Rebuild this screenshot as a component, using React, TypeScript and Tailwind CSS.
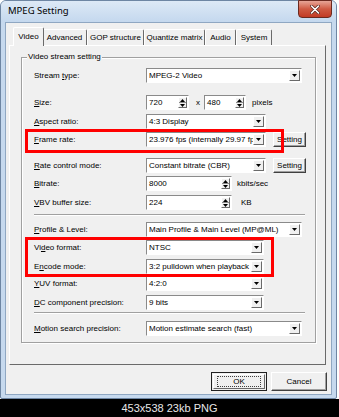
import React from "react";

const F = { fontFamily: '"Liberation Sans", Arial, sans-serif' };

function Arrow() {
  return (
    <svg width="5" height="3" viewBox="0 0 5 3" className="block">
      <path d="M0 0H5L2.5 3Z" fill="#000" />
    </svg>
  );
}

function DropBtn() {
  return (
    <div className="flex h-full w-[11px] shrink-0 items-center justify-center border-t border-l border-b border-r border-t-white border-l-white border-b-[#6a6a6a] border-r-[#6a6a6a] bg-[#f0f0f0]">
      <Arrow />
    </div>
  );
}

function Combo({ w, text }: { w: number; text: string }) {
  return (
    <div
      className="flex h-[15px] shrink-0 items-stretch border border-t-[#8a8a8a] border-l-[#8a8a8a] border-b-white border-r-white bg-white p-[1px]"
      style={{ width: w }}
    >
      <div className="flex-1 overflow-hidden whitespace-nowrap pl-[1px] text-[8px] leading-[11px] text-black">{text}</div>
      <DropBtn />
    </div>
  );
}

function Spin() {
  return (
    <div className="flex h-full w-[9px] shrink-0 flex-col border border-t-white border-l-white border-b-[#6a6a6a] border-r-[#6a6a6a] bg-[#f0f0f0]">
      <div className="flex flex-1 items-center justify-center">
        <svg width="5" height="3" viewBox="0 0 5 3"><path d="M0 3H5L2.5 0Z" fill="#000" /></svg>
      </div>
      <div className="h-px bg-[#8a8a8a]" />
      <div className="flex flex-1 items-center justify-center">
        <svg width="5" height="3" viewBox="0 0 5 3"><path d="M0 0H5L2.5 3Z" fill="#000" /></svg>
      </div>
    </div>
  );
}

function SpinEdit({ w, text }: { w: number; text: string }) {
  return (
    <div
      className="flex h-[15px] shrink-0 items-stretch border border-t-[#8a8a8a] border-l-[#8a8a8a] border-b-white border-r-white bg-white p-[1px]"
      style={{ width: w }}
    >
      <div className="flex-1 whitespace-nowrap pl-[1px] text-[8px] leading-[11px] text-black">{text}</div>
      <Spin />
    </div>
  );
}

function SmallBtn({ children }: { children: React.ReactNode }) {
  return (
    <div className="flex h-[15px] w-[33px] items-center justify-center border border-t-white border-l-white border-b-[#404040] border-r-[#404040] bg-[#f0f0f0] text-[8px] text-black shadow-[inset_-1px_-1px_0_#a0a0a0]">
      {children}
    </div>
  );
}

function Label({ children }: { children: React.ReactNode }) {
  return <div className="w-[112px] shrink-0 whitespace-nowrap text-[8px] leading-[15px] text-black">{children}</div>;
}

function U({ children }: { children: React.ReactNode }) {
  return <span className="underline decoration-[0.5px] underline-offset-[1px]">{children}</span>;
}

function Row({ mt, children }: { mt: string; children: React.ReactNode }) {
  return <div className={`flex h-[15px] items-center ${mt}`}>{children}</div>;
}

function Sep({ mt }: { mt: string }) {
  return (
    <div className={`${mt} mr-[10px] flex flex-col`}>
      <div className="h-px bg-[#a0a0a0]" />
      <div className="h-px bg-white" />
    </div>
  );
}

function Tab({ label, w, sel }: { label: string; w: number; sel?: boolean }) {
  return (
    <div
      className={`flex items-center justify-center border-l border-t border-r border-l-white border-t-white border-r-[#6a6a6a] bg-[#f0f0f0] text-[8px] text-black rounded-t-[2px] ${
        sel ? "relative z-10 -mb-px h-[19px] -mx-[2px]" : "h-[16px]"
      }`}
      style={{ width: w }}
    >
      {label}
    </div>
  );
}

export default function App() {
  return (
    <div className="flex h-[417px] w-[339px] flex-col overflow-hidden bg-black" style={F}>
      <div className="h-[399px] bg-white">
        <div className="flex h-[399px] w-[337px] flex-col rounded-t-[6px] rounded-b-[2px] border border-[#6e86a3] bg-[#c6d9ee]">
          {/* title bar */}
          <div className="relative flex h-[21px] shrink-0 items-center rounded-t-[5px] bg-gradient-to-b from-[#dde9f6] to-[#c4d8ee] pl-[7px]">
            <span className="text-[9.5px] text-black" style={{ fontFamily: '"Noto Sans", "Open Sans", sans-serif' }}>MPEG Setting</span>
            <div className="absolute right-[4px] top-[-1px] flex h-[18px] w-[34px] items-center justify-center rounded-b-[4px] border border-[#6b2a20] bg-gradient-to-b from-[#e6a597] via-[#cf5a43] to-[#c23a24]">
              <svg width="10" height="9" viewBox="0 0 10 9">
                <path d="M1.5 1L8.5 8M8.5 1L1.5 8" stroke="#5a2a22" strokeWidth="3" strokeLinecap="round" />
                <path d="M1.5 1L8.5 8M8.5 1L1.5 8" stroke="#fff" strokeWidth="1.6" strokeLinecap="round" />
              </svg>
            </div>
          </div>
          {/* client */}
          <div className="mx-[4px] flex h-[373px] flex-col border border-[#8fa7c2] bg-[#f0f0f0] px-[3px]">
            {/* tabs */}
            <div className="mt-[5px] flex h-[17px] items-end pl-[6px]">
              <Tab label="Video" w={31} sel />
              <Tab label="Advanced" w={45} />
              <Tab label="GOP structure" w={57} />
              <Tab label="Quantize matrix" w={61} />
              <Tab label="Audio" w={31} />
              <Tab label="System" w={36} />
            </div>
            {/* panel */}
            <div className="relative h-[320px] w-[317px] border border-t-white border-l-white border-b-[#6a6a6a] border-r-[#6a6a6a] pt-[11px] pl-[11px]">
              <div className="relative h-[286px] w-[295px] border border-[#a0a0a0] shadow-[1px_1px_0_#fff,inset_1px_1px_0_#fff]">
                <div className="absolute left-[5px] top-[-7px] bg-[#f0f0f0] px-[1px] text-[8px] leading-[12px] text-black">Video stream setting</div>
                <div className="flex flex-col pl-[12px] pt-[10px]">
                  <Row mt="mt-0">
                    <Label>Stream <U>t</U>ype:</Label>
                    <Combo w={156} text="MPEG-2 Video" />
                  </Row>
                  <Row mt="mt-[12px]">
                    <Label><U>S</U>ize:</Label>
                    <SpinEdit w={43} text="720" />
                    <span className="ml-[7px] w-[8px] text-[8px]">x</span>
                    <SpinEdit w={42} text="480" />
                    <span className="ml-[6px] text-[8px]">pixels</span>
                  </Row>
                  <Row mt="mt-[4px]">
                    <Label><U>A</U>spect ratio:</Label>
                    <Combo w={120} text="4:3 Display" />
                  </Row>
                  <Row mt="mt-[3px]">
                    <Label><U>F</U>rame rate:</Label>
                    <Combo w={120} text="23.976 fps (internally 29.97 fps)" />
                    <div className="ml-[7px]"><SmallBtn>Setting</SmallBtn></div>
                  </Row>
                  <Row mt="mt-[11px]">
                    <Label><U>R</U>ate control mode:</Label>
                    <Combo w={120} text="Constant bitrate (CBR)" />
                    <div className="ml-[7px]"><SmallBtn>Setting</SmallBtn></div>
                  </Row>
                  <Row mt="mt-[3px]">
                    <Label><U>B</U>itrate:</Label>
                    <SpinEdit w={86} text="8000" />
                    <span className="ml-[5px] text-[8px]">kbits/sec</span>
                  </Row>
                  <Row mt="mt-[4px]">
                    <Label><U>V</U>BV buffer size:</Label>
                    <SpinEdit w={86} text="224" />
                    <span className="ml-[9px] text-[8px]">KB</span>
                  </Row>
                  <Sep mt="mt-[4px]" />
                  <Row mt="mt-[6px]">
                    <Label><U>P</U>rofile &amp; Level:</Label>
                    <Combo w={156} text="Main Profile & Main Level (MP@ML)" />
                  </Row>
                  <Row mt="mt-[3px]">
                    <Label>Vi<U>d</U>eo format:</Label>
                    <Combo w={118} text="NTSC" />
                  </Row>
                  <Row mt="mt-[4px]">
                    <Label>E<U>n</U>code mode:</Label>
                    <Combo w={118} text="3:2 pulldown when playback" />
                  </Row>
                  <Row mt="mt-[2px]">
                    <Label><U>Y</U>UV format:</Label>
                    <Combo w={118} text="4:2:0" />
                  </Row>
                  <Row mt="mt-[4px]">
                    <Label><U>D</U>C component precision:</Label>
                    <Combo w={118} text="9 bits" />
                  </Row>
                  <Sep mt="mt-[2px]" />
                  <Row mt="mt-[7px]">
                    <Label><U>M</U>otion search precision:</Label>
                    <Combo w={156} text="Motion estimate search (fast)" />
                  </Row>
                </div>
              </div>
              {/* red highlight boxes */}
              <div className="absolute left-[15px] top-[83px] h-[24px] w-[259px] border-[3px] border-[#ff0000]" />
              <div className="absolute left-[15px] top-[191px] h-[40px] w-[249px] border-[3px] border-[#ff0000]" />
            </div>
            {/* buttons */}
            <div className="mt-[7px] flex justify-end gap-[4px] pr-[1px]">
              <div className="flex h-[19px] w-[56px] items-center justify-center border border-[#202020] bg-[#f0f0f0] p-[1px]">
                <div className="flex h-full w-full items-center justify-center border border-t-white border-l-white border-b-[#6a6a6a] border-r-[#6a6a6a]">
                  <div className="flex h-[11px] w-[44px] items-center justify-center border border-dotted border-[#404040] text-[8px] text-black">OK</div>
                </div>
              </div>
              <div className="flex h-[19px] w-[56px] items-center justify-center border border-t-white border-l-white border-b-[#404040] border-r-[#404040] bg-[#f0f0f0] text-[8px] text-black shadow-[inset_-1px_-1px_0_#a0a0a0]">
                Cancel
              </div>
            </div>
          </div>
        </div>
      </div>
      <div className="flex h-[18px] items-center justify-center text-[11px] text-[#e8e8e8]" style={{ fontFamily: '"Liberation Sans", Arial, sans-serif' }}>
        453x538 23kb PNG
      </div>
    </div>
  );
}
